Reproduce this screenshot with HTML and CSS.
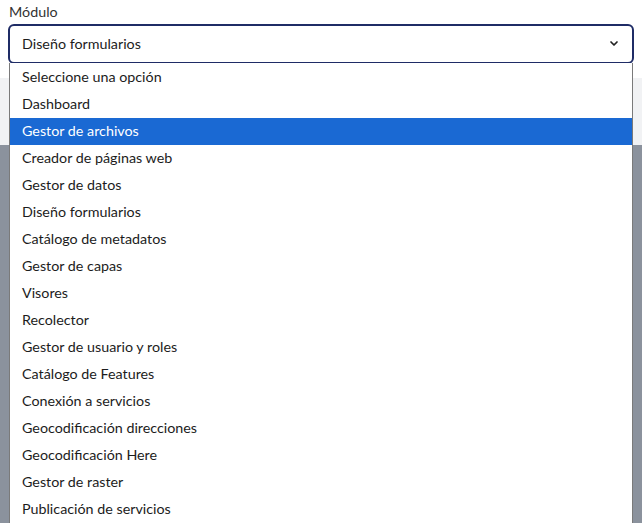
FILE: index.html
```html
<!DOCTYPE html>
<html lang="es">
<head>
<meta charset="utf-8">
<link rel="stylesheet" href="styles.css">
</head>
<body>
<div class="page">
  <div class="top">
    <div class="field">
      <label class="label">Módulo</label>
      <div class="select">
        <span class="value">Diseño formularios</span>
        <svg class="chev" width="10" height="7" viewBox="0 0 10 7"><path d="M2 2 L5 5 L8 2" fill="none" stroke="#222" stroke-width="1.7" stroke-linecap="round" stroke-linejoin="round"/></svg>
      </div>
    </div>
  </div>
  <div class="band"></div>
  <div class="shade"></div>

  <ul class="listbox">
    <li class="opt">Seleccione una opción</li>
    <li class="opt">Dashboard</li>
    <li class="opt active">Gestor de archivos</li>
    <li class="opt">Creador de páginas web</li>
    <li class="opt">Gestor de datos</li>
    <li class="opt">Diseño formularios</li>
    <li class="opt">Catálogo de metadatos</li>
    <li class="opt">Gestor de capas</li>
    <li class="opt">Visores</li>
    <li class="opt">Recolector</li>
    <li class="opt">Gestor de usuario y roles</li>
    <li class="opt">Catálogo de Features</li>
    <li class="opt">Conexión a servicios</li>
    <li class="opt">Geocodificación direcciones</li>
    <li class="opt">Geocodificación Here</li>
    <li class="opt">Gestor de raster</li>
    <li class="opt">Publicación de servicios</li>
  </ul>
</div>
</body>
</html>
```

FILE: styles.css
```css
html, body {
  margin: 0;
  padding: 0;
  height: 100%;
  overflow: hidden;
}
body {
  font-family: Lato, "Noto Sans", sans-serif;
  font-size: 14.3px;
  color: #1c1c1c;
  background: #8b929d;
}
.page {
  position: relative;
  height: 523px;
  display: flex;
  flex-direction: column;
}
.top {
  background: #ffffff;
  height: 78px;
  flex: none;
}
.field {
  padding: 3px 8px 0 8px;
  display: flex;
  flex-direction: column;
}
.label {
  font-size: 14.3px;
  color: #333;
  padding-left: 1px;
  line-height: 17px;
  margin-bottom: 4px;
}
.select {
  height: 35px;
  border: 2px solid #1f2c66;
  border-radius: 6px;
  display: flex;
  align-items: center;
  justify-content: space-between;
  padding: 0 13px 1px 12px;
}
.value {
  color: #1c1c1c;
}
.band {
  height: 67px;
  flex: none;
  background: #f1f2f4;
}
.shade {
  flex: 1;
  background: #8b929d;
}
.listbox {
  position: absolute;
  top: 63px;
  left: 9px;
  width: 622px;
  margin: 0;
  padding: 1px 0 0 0;
  list-style: none;
  background: #fff;
  border-left: 1px solid #7a7a7a;
  border-right: 1px solid #7a7a7a;
  height: 470px;
}
.opt {
  height: 27px;
  line-height: 26px;
  padding-left: 12px;
  color: #1c1c1c;
}
.opt.active {
  background: #1a69d3;
  color: #ffffff;
}
```
